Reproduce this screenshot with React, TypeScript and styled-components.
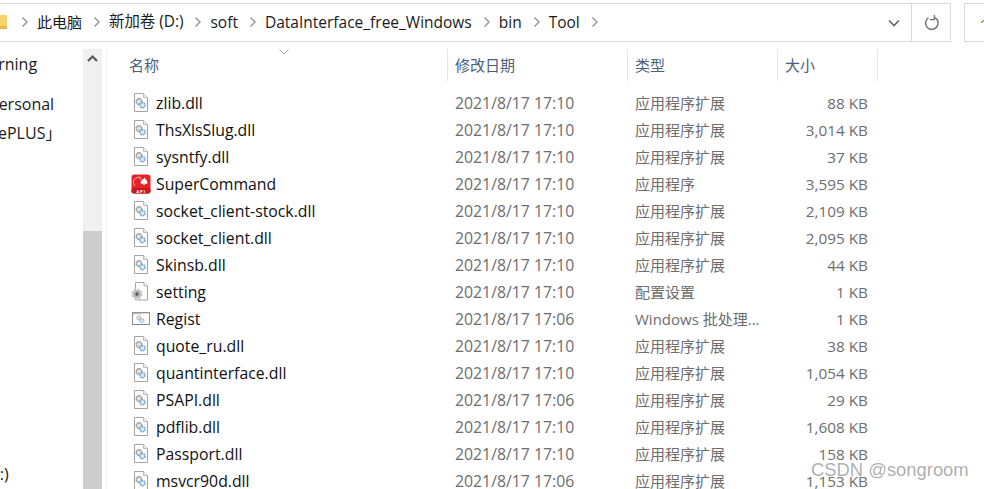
import React from "react";
import styled, { createGlobalStyle } from "styled-components";

const Global = createGlobalStyle`
  html, body { margin: 0; padding: 0; background: #fff; }
  body { width: 984px; height: 489px; overflow: hidden; font-family: "Open Sans", "Noto Sans CJK SC", sans-serif; }
`;
const Page = styled.div`
  position: relative; width: 984px; height: 489px; overflow: hidden; background: #fff;
  display: flex; flex-direction: column; padding-top: 3px; box-sizing: border-box;
`;
const TopBar = styled.div`display: flex; height: 39px; flex: none; gap: 13px; margin-left: -2px;`;
const Address = styled.div`
  width: 953px; flex: none; box-sizing: border-box; border: 1px solid #d9d9d9; border-width: 1.5px 1.5px 1.5px 0;
  display: flex; align-items: center;
`;
const Crumbs = styled.div`flex: 1; display: flex; align-items: center; color: #1a1a1a; height: 100%; min-width: 0; padding-bottom: 2px; box-sizing: border-box;`;
const Folder = styled.svg`margin-right: 14px; flex: none;`;
const Crumb = styled.span<{ $size: number }>`white-space: nowrap; line-height: 20px; padding: 0 11px 0 8px; font-size: ${(p) => p.$size}px;`;
const Tools = styled.div`display: flex; height: 100%; align-items: center;`;
const DropButton = styled.div`width: 40px; display: flex; justify-content: center; padding-left: 6px; box-sizing: border-box;`;
const Refresh = styled.div`width: 39px; height: 100%; border-left: 1.5px solid #d9d9d9; display: flex; align-items: center; justify-content: center; padding-left: 2px; box-sizing: border-box;`;
const Search = styled.div`flex: 1; border: 1.5px solid #d9d9d9; border-right: 0; box-sizing: border-box; display: flex; align-items: center; justify-content: flex-end; padding: 0 0 3px;`;
const Main = styled.div`flex: 1; display: flex; margin-top: 7px; min-height: 0;`;
const Side = styled.div`width: 83px; flex: none; overflow: hidden; position: relative; display: flex; flex-direction: column; font-size: 16px; color: #1a1a1a;`;
const SideItem = styled.div<{ $shift: number; $top: number }>`
  white-space: nowrap; line-height: 22px; margin-left: ${(p) => p.$shift}px; margin-top: ${(p) => p.$top}px;
`;
const Scroll = styled.div`width: 19px; flex: none; background: #f0f0f0; display: flex; flex-direction: column;`;
const ScrollUp = styled.div`height: 182px; display: flex; justify-content: center; padding-top: 6px; box-sizing: border-box;`;
const Thumb = styled.div`flex: 1; background: #cdcdcd;`;
const Files = styled.div`flex: 1; margin-left: 4px; border-left: 1px solid #f1f1f1; min-width: 0;`;
const COLS = "341px 180px 150px 100px";
const Head = styled.div`display: grid; grid-template-columns: ${COLS}; height: 32px; margin-bottom: 8px; color: #4c607a; font-size: 15px;`;
const HeadCell = styled.div`
  position: relative; border-right: 1px solid #e5e5e5; display: flex; align-items: center; padding: 0 0 2px 7px; box-sizing: border-box;
  &:first-child { padding-left: 22px; }
`;
const SortMark = styled.svg`position: absolute; left: 172px; top: 0px;`;
const Row = styled.div`display: grid; grid-template-columns: ${COLS}; height: 27px; align-items: center; font-size: 15.8px;`;
const NameCell = styled.div`display: flex; align-items: center; padding-left: 23px; gap: 6px; color: #111; white-space: nowrap;`;
const IconBox = styled.span`width: 20px; height: 20px; flex: none; display: flex;`;
const DateCell = styled.div`padding-left: 7px; color: #6d6d6d; font-size: 15.8px; white-space: nowrap;`;
const TypeCell = styled.div`padding-left: 7px; color: #6d6d6d; font-size: 15px; white-space: nowrap;`;
const SizeCell = styled.div`text-align: right; padding-right: 10px; color: #6d6d6d; font-size: 15.3px; white-space: nowrap;`;
const Watermark = styled.div`
  position: absolute; left: 811px; top: 458px; font-family: "Liberation Sans", sans-serif; font-size: 18.4px; line-height: 24px;
  color: rgba(120,120,120,.6); white-space: nowrap;
`;

const Chevron = () => (
  <svg width="8" height="12" viewBox="0 0 8 12" style={{ flex: "none" }}><path d="M1.500 1.500 6 6l-4.500 4.500" fill="none" stroke="#9a9a9a" strokeWidth="1.500" /></svg>
);
const Dll = () => (
  <svg width="20" height="20" viewBox="0 0 20 20">
    <path d="M4.500.500h9l4 4v14h-13z" fill="#fff" stroke="#a3a3a3" />
    <path d="M13.500.500v4h4" fill="#eee" stroke="#bcbcbc" />
    <circle cx="9" cy="8.500" r="2.800" fill="#e4e4e4" stroke="#929292" strokeWidth="1.500" strokeDasharray="1.600 .6" />
    <circle cx="12.500" cy="12.200" r="2.600" fill="#d8eaf8" stroke="#6aa3d0" strokeWidth="1.400" strokeDasharray="1.600 .6" />
  </svg>
);
const Setting = () => (
  <svg width="20" height="20" viewBox="0 0 20 20">
    <path d="M5.500.500h8.500l3.500 3.500v14h-12z" fill="#fff" stroke="#a5a5a5" />
    <path d="M14 .500v3.500h3.500" fill="#eee" stroke="#b5b5b5" />
    <circle cx="7" cy="12" r="4" fill="#adadad" stroke="#c4c4c4" strokeWidth="3.200" strokeDasharray="2 1.100" />
    <circle cx="7" cy="12" r="1.700" fill="#5a5a5a" />
  </svg>
);
const Bat = () => (
  <svg width="20" height="20" viewBox="0 0 20 20">
    <rect x="2.500" y="3.500" width="17" height="12" fill="#fff" stroke="#8d8d8d" />
    <path d="M3 4.500h16" stroke="#b9b9b9" strokeWidth="1.500" strokeDasharray="9 1 1 1 1 1 1 1" />
    <circle cx="9" cy="9" r="2" fill="#e4e4e4" stroke="#929292" strokeDasharray="1.400 .5" />
    <circle cx="12" cy="11.500" r="2" fill="#d8eaf8" stroke="#6aa3d0" strokeDasharray="1.400 .5" />
  </svg>
);
const Red = () => (
  <svg width="20" height="20" viewBox="0 0 20 20" style={{ marginLeft: 1, marginRight: -1 }}>
    <rect x="0.500" y="0.500" width="19" height="19" rx="3" fill="#ea2027" />
    <rect x="0.500" y="14" width="19" height="5.500" rx="2" fill="#c9151b" />
    <path d="M4 12a5 5 0 0 1 1-8l4-1.200 1 3" fill="none" stroke="#f8b4b4" strokeWidth="1" />
    <path d="M13.500 3.500c1 2 3 3 3 5a1.600 1.600 0 0 1-3 .6l.4 2h-1.800l.4-2a1.600 1.600 0 0 1-3-.6c0-2 3-3 4-5z" fill="#fff" />
    <text x="10" y="18.600" textAnchor="middle" fontFamily="Liberation Sans" fontWeight="700" fontSize="4.200" letterSpacing=".8" fill="#fff">API</text>
  </svg>
);

type Kind = "dll" | "app" | "cfg" | "bat";
const EXT = "应用程序扩展";
const files: [string, Kind, string, string, string][] = [
  ["zlib.dll", "dll", "2021/8/17 17:10", EXT, "88 KB"],
  ["ThsXlsSlug.dll", "dll", "2021/8/17 17:10", EXT, "3,014 KB"],
  ["sysntfy.dll", "dll", "2021/8/17 17:10", EXT, "37 KB"],
  ["SuperCommand", "app", "2021/8/17 17:10", "应用程序", "3,595 KB"],
  ["socket_client-stock.dll", "dll", "2021/8/17 17:10", EXT, "2,109 KB"],
  ["socket_client.dll", "dll", "2021/8/17 17:10", EXT, "2,095 KB"],
  ["Skinsb.dll", "dll", "2021/8/17 17:10", EXT, "44 KB"],
  ["setting", "cfg", "2021/8/17 17:10", "配置设置", "1 KB"],
  ["Regist", "bat", "2021/8/17 17:06", "Windows 批处理...", "1 KB"],
  ["quote_ru.dll", "dll", "2021/8/17 17:10", EXT, "38 KB"],
  ["quantinterface.dll", "dll", "2021/8/17 17:10", EXT, "1,054 KB"],
  ["PSAPI.dll", "dll", "2021/8/17 17:06", EXT, "29 KB"],
  ["pdflib.dll", "dll", "2021/8/17 17:10", EXT, "1,608 KB"],
  ["Passport.dll", "dll", "2021/8/17 17:10", EXT, "158 KB"],
  ["msvcr90d.dll", "dll", "2021/8/17 17:06", EXT, "1,153 KB"],
];
const icons = { dll: Dll, app: Red, cfg: Setting, bat: Bat };
const crumbs: [string, number][] = [["此电脑", 15], ["新加卷 (D:)", 15.4], ["soft", 15.5], ["DataInterface_free_Windows", 15.5], ["bin", 15.5], ["Tool", 15.5]];

export default function App() {
  return (
    <Page>
      <Global />
      <TopBar>
        <Address>
          <Crumbs>
            <Folder width="9" height="14" viewBox="0 0 9 14"><rect x="0" y="0" width="9" height="14" fill="#f6d36b" /><rect x="0" y="11" width="9" height="3" fill="#e9b949" /></Folder>
            <Chevron />
            {crumbs.map(([c, size]) => (
              <React.Fragment key={c}>
                <Crumb $size={size}>{c}</Crumb>
                <Chevron />
              </React.Fragment>
            ))}
          </Crumbs>
          <Tools>
            <DropButton>
              <svg width="12" height="8" viewBox="0 0 12 8"><path d="M1 1.500l5 5 5-5" fill="none" stroke="#666" strokeWidth="1.600" /></svg>
            </DropButton>
            <Refresh>
              <svg width="16" height="16" viewBox="0 0 16 16"><path d="M10.500 2.400A6.300 6.300 0 1 1 4.400 2.800" fill="none" stroke="#7a7a7a" strokeWidth="1.600" /><path d="M10.400 0v4.600H6" fill="none" stroke="#7a7a7a" strokeWidth="1.400" /></svg>
            </Refresh>
          </Tools>
        </Address>
        <Search>
          <svg width="3" height="3" viewBox="0 0 3 3"><path d="M0 3l3-3" stroke="#a58a5a" strokeWidth="1.500" /></svg>
        </Search>
      </TopBar>
      <Main>
        <Side>
          <SideItem $shift={-28} $top={4}>Learning</SideItem>
          <SideItem $shift={-11} $top={18}>Personal</SideItem>
          <SideItem $shift={-2} $top={7}>ePLUS」</SideItem>
          <SideItem $shift={-15} $top={319}>(C:)</SideItem>
        </Side>
        <Scroll>
          <ScrollUp>
            <svg width="11" height="7" viewBox="0 0 11 7"><path d="M1 6l4.500-4.500L10 6" fill="none" stroke="#555" strokeWidth="2" /></svg>
          </ScrollUp>
          <Thumb />
        </Scroll>
        <Files>
          <Head>
            <HeadCell>
              名称
              <SortMark width="10" height="6" viewBox="0 0 10 6"><path d="M.5.500 5 5 9.500.500" fill="none" stroke="#a0a0a0" /></SortMark>
            </HeadCell>
            <HeadCell>修改日期</HeadCell>
            <HeadCell>类型</HeadCell>
            <HeadCell>大小</HeadCell>
          </Head>
          {files.map(([name, kind, date, type, size]) => {
            const Icon = icons[kind];
            return (
              <Row key={name}>
                <NameCell><IconBox><Icon /></IconBox>{name}</NameCell>
                <DateCell>{date}</DateCell>
                <TypeCell>{type}</TypeCell>
                <SizeCell>{size}</SizeCell>
              </Row>
            );
          })}
        </Files>
      </Main>
      <Watermark>CSDN @songroom</Watermark>
    </Page>
  );
}
